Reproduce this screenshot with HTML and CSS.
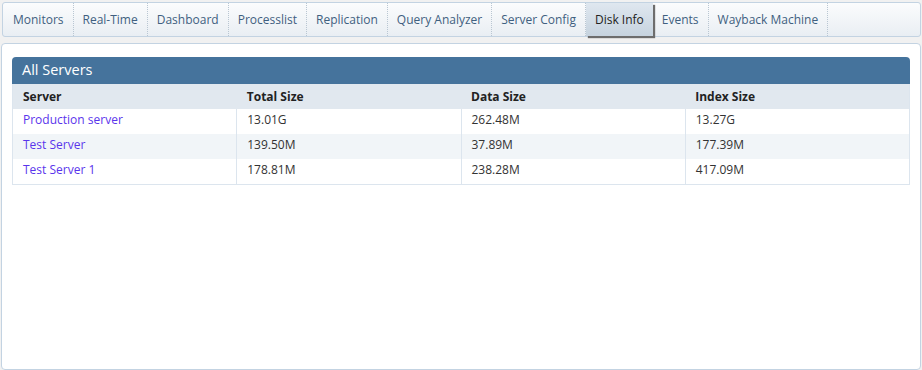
FILE: index.html
```html
<!DOCTYPE html>
<html lang="en">
<head>
	<meta charset="UTF-8">
	<title>Disk Info</title>
	<link rel="stylesheet" href="styles.css">
</head>
<body>
<div class="tabs">
	<a class="tab">Monitors</a>
	<a class="tab">Real-Time</a>
	<a class="tab">Dashboard</a>
	<a class="tab">Processlist</a>
	<a class="tab">Replication</a>
	<a class="tab">Query Analyzer</a>
	<a class="tab">Server Config</a>
	<a class="tab active">Disk Info</a>
	<a class="tab">Events</a>
	<a class="tab">Wayback Machine</a>
</div>
<div class="panel">
	<div class="box">
		<div class="box-title">All Servers</div>
		<table class="grid">
			<tr class="head">
				<th>Server</th>
				<th>Total Size</th>
				<th>Data Size</th>
				<th>Index Size</th>
			</tr>
			<tr>
				<td><a href="#">Production server</a></td>
				<td>13.01G</td>
				<td>262.48M</td>
				<td>13.27G</td>
			</tr>
			<tr class="alt">
				<td><a href="#">Test Server</a></td>
				<td>139.50M</td>
				<td>37.89M</td>
				<td>177.39M</td>
			</tr>
			<tr>
				<td><a href="#">Test Server 1</a></td>
				<td>178.81M</td>
				<td>238.28M</td>
				<td>417.09M</td>
			</tr>
		</table>
	</div>
</div>
</body>
</html>
```
FILE: styles.css
```css
body {
	margin: 0;
	padding: 2px 1px 0 1px;
	background: #f1f1f1;
	font-family: "Open Sans", "Noto Sans", sans-serif;
	font-size: 12px;
	color: #333;
}
.tabs {
	display: flex;
	height: 33px;
	margin-left: 1px;
	border: 1px solid #c3d3e2;
	border-radius: 3px;
	background: linear-gradient(#fbfcfd, #e9eef3);
}
.tab {
	display: flex;
	align-items: center;
	padding: 0 9px;
	border-right: 1px dotted #b9c6d2;
	color: #3f5f80;
	font-size: 12px;
	cursor: pointer;
}
.tab:first-child {
	padding-left: 10px;
}
.tab.active {
	background: linear-gradient(#dfe7ef, #c6d3df);
	color: #222;
	border-right: none;
	box-shadow: 2px 2px 1px #6d6d6d;
	position: relative;
}
.panel {
	box-sizing: border-box;
	margin-top: 6px;
	height: 327px;
	padding: 13px 10px 0 10px;
	background: #fff;
	border: 1px solid #c3d3e2;
	border-radius: 4px;
}
.box-title {
	height: 27px;
	line-height: 26px;
	padding-left: 10px;
	background: #45739c;
	color: #fff;
	font-size: 14.5px;
	border-radius: 4px 4px 0 0;
}
.grid {
	width: 100%;
	border-collapse: collapse;
	border: 1px solid #dce5ee;
	border-top: none;
}
.grid th {
	box-sizing: border-box;
	height: 25px;
	padding: 0 10px;
	text-align: left;
	font-weight: bold;
	color: #222;
	background: #e1e8ef;
	width: 25%;
}
.grid td {
	box-sizing: border-box;
	height: 25px;
	padding: 0 10px;
	border-right: 1px solid #dce5ee;
	vertical-align: top;
	line-height: 21px;
}
.grid tr.alt td {
	background: #f1f5f8;
}
.grid a {
	color: #5a35ec;
	text-decoration: none;
}
```
